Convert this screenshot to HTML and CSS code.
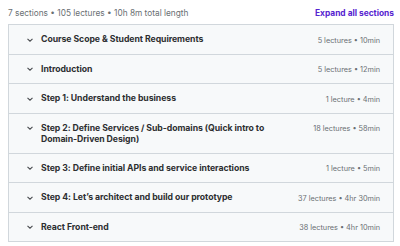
FILE: index.html
```html
<!DOCTYPE html>
<html>
<head>
<meta charset="utf-8">
<link rel="stylesheet" href="styles.css">
</head>
<body>
<div class="curriculum">
  <div class="summary">
    <span class="stats">7 sections • 105 lectures • 10h 8m total length</span>
    <button class="expand">Expand all sections</button>
  </div>
  <div class="sections">
    <div class="section">
      <svg class="chev" viewBox="0 0 10 10"><path d="M2.5 3.8 L5 6.2 L7.5 3.8" /></svg>
      <span class="title">Course Scope &amp; Student Requirements</span>
      <span class="meta">5 lectures • 10min</span>
    </div>
    <div class="section">
      <svg class="chev" viewBox="0 0 10 10"><path d="M2.5 3.8 L5 6.2 L7.5 3.8" /></svg>
      <span class="title">Introduction</span>
      <span class="meta">5 lectures • 12min</span>
    </div>
    <div class="section">
      <svg class="chev" viewBox="0 0 10 10"><path d="M2.5 3.8 L5 6.2 L7.5 3.8" /></svg>
      <span class="title">Step 1: Understand the business</span>
      <span class="meta">1 lecture • 4min</span>
    </div>
    <div class="section">
      <svg class="chev" viewBox="0 0 10 10"><path d="M2.5 3.8 L5 6.2 L7.5 3.8" /></svg>
      <span class="title">Step 2: Define Services / Sub-domains (Quick intro to Domain-Driven Design)</span>
      <span class="meta">18 lectures • 58min</span>
    </div>
    <div class="section">
      <svg class="chev" viewBox="0 0 10 10"><path d="M2.5 3.8 L5 6.2 L7.5 3.8" /></svg>
      <span class="title">Step 3: Define initial APIs and service interactions</span>
      <span class="meta">1 lecture • 5min</span>
    </div>
    <div class="section">
      <svg class="chev" viewBox="0 0 10 10"><path d="M2.5 3.8 L5 6.2 L7.5 3.8" /></svg>
      <span class="title">Step 4: Let’s architect and build our prototype</span>
      <span class="meta">37 lectures • 4hr 30min</span>
    </div>
    <div class="section">
      <svg class="chev" viewBox="0 0 10 10"><path d="M2.5 3.8 L5 6.2 L7.5 3.8" /></svg>
      <span class="title">React Front-end</span>
      <span class="meta">38 lectures • 4hr 10min</span>
    </div>
  </div>
</div>
</body>
</html>
```
FILE: styles.css
```css
html, body {
  margin: 0;
  padding: 0;
  background: #ffffff;
}
body {
  padding: 0 6px 0 8px;
  font-family: Inter, "Noto Sans", sans-serif;
  color: #2d2f31;
}
.summary {
  height: 24px;
  display: flex;
  align-items: center;
  justify-content: space-between;
  padding-top: 2px;
  box-sizing: border-box;
}
.stats {
  font-size: 8.3px;
  color: #6a6f73;
}
.expand {
  border: 0;
  background: none;
  padding: 0;
  font-family: inherit;
  font-size: 8.4px;
  font-weight: 700;
  color: #5624d0;
}
.sections {
  border: 1px solid #d1d7dc;
  border-bottom: 0;
}
.section {
  display: flex;
  align-items: flex-start;
  background: #f7f9fa;
  border-bottom: 1px solid #d1d7dc;
  padding: 9px 13px 8px 16px;
  line-height: 11px;
}
.chev {
  width: 10px;
  height: 10px;
  flex: none;
  margin-top: 0.5px;
  margin-right: 6px;
  fill: none;
  stroke: #4a4d50;
  stroke-width: 1.1;
}
.title {
  flex: 1;
  font-size: 8.7px;
  font-weight: 700;
  letter-spacing: -0.05px;
  padding-right: 24px;
}
.meta {
  flex: none;
  font-size: 7.3px;
  color: #6a6f73;
  padding-top: 0.5px;
}
```
